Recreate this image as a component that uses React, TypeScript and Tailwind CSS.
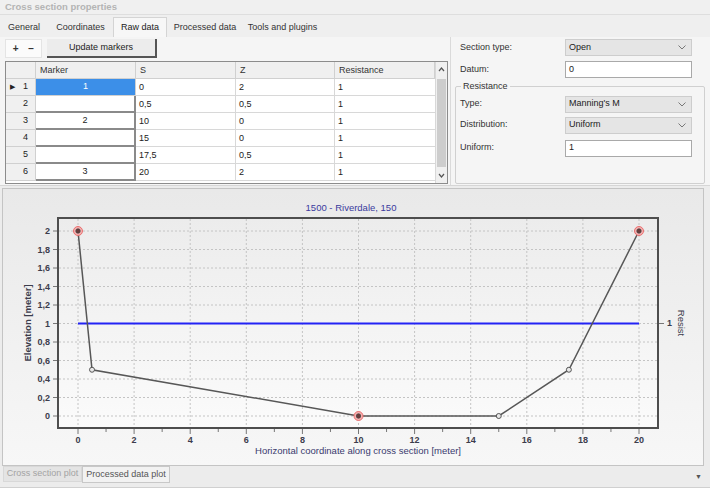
import React from "react";

// chart mapping in page coordinates
const px = (v: number) => 78 + v * 28.05;
const py = (v: number) => 416 - v * 92.5;

const rows = [
  { n: 1, marker: "1", s: "0", z: "2", r: "1" },
  { n: 2, marker: "", s: "0,5", z: "0,5", r: "1" },
  { n: 3, marker: "2", s: "10", z: "0", r: "1" },
  { n: 4, marker: "", s: "15", z: "0", r: "1" },
  { n: 5, marker: "", s: "17,5", z: "0,5", r: "1" },
  { n: 6, marker: "3", s: "20", z: "2", r: "1" },
];

const points: [number, number][] = [
  [0, 2],
  [0.5, 0.5],
  [10, 0],
  [15, 0],
  [17.5, 0.5],
  [20, 2],
];
const markerIdx = [0, 2, 5];

const tabs = [
  { label: "General", w: "w-[48px]" },
  { label: "Coordinates", w: "w-[65px]" },
  { label: "Raw data", w: "w-[54px]", active: true },
  { label: "Processed data", w: "w-[76px]" },
  { label: "Tools and plugins", w: "w-[79px]" },
];

function Chevron() {
  return (
    <svg width="8" height="5" viewBox="0 0 8 5" className="mr-[5px]">
      <path d="M0.5 0.5 L4 4 L7.5 0.5" fill="none" stroke="#777" strokeWidth="1" />
    </svg>
  );
}

function Combo({ value }: { value: string }) {
  return (
    <div className="flex h-[17px] w-[127px] items-center justify-between border border-[#cdcdcd] bg-[#e5e5e5] pl-[3px] text-[#222]">
      <span>{value}</span>
      <Chevron />
    </div>
  );
}

function Input({ value }: { value: string }) {
  return (
    <div className="flex h-[17px] w-[127px] items-center border border-[#a9a9a9] bg-white pl-[3px] text-[#222]">
      {value}
    </div>
  );
}

function FieldRow({ label, children }: { label: string; children: React.ReactNode }) {
  return (
    <div className="flex h-[17px] items-center">
      <div className="w-[110px] pl-[5px] text-[#333]">{label}</div>
      {children}
    </div>
  );
}

function Grid() {
  const cols = "flex h-[17px]";
  return (
    <div className="flex h-[123px] w-[443px] border border-[#8c8c8c] bg-white">
      <div className="flex flex-col">
        <div className={`${cols} bg-[#f0f0f0] text-[#333]`}>
          <div className="w-[30px] border-r border-b border-[#d0d0d0]" />
          <div className="w-[100px] border-r border-b border-[#d0d0d0] pl-[4px] leading-[17px]">Marker</div>
          <div className="w-[100px] border-r border-b border-[#d0d0d0] pl-[4px] leading-[17px]">S</div>
          <div className="w-[99px] border-r border-b border-[#d0d0d0] pl-[4px] leading-[17px]">Z</div>
          <div className="w-[100px] border-r border-b border-[#d0d0d0] pl-[4px] leading-[17px]">Resistance</div>
        </div>
        {rows.map((r) => (
          <div key={r.n} className={`${cols} text-[#222]`}>
            <div className="flex w-[30px] items-center justify-between border-r border-b border-[#d0d0d0] bg-[#f0f0f0] pl-[4px] pr-[7px]">
              <span className="text-[7px] text-[#222]">{r.n === 1 ? "▶" : ""}</span>
              <span>{r.n}</span>
            </div>
            <div
              className={
                r.n === 1
                  ? "flex w-[100px] items-center justify-center border-r border-b border-[#d0d0d0] bg-[#3c8fe8] text-white"
                  : "flex w-[100px] items-center justify-center border-r-2 border-b-2 border-[#8a8a8a] bg-white"
              }
            >
              {r.marker}
            </div>
            <div className="w-[100px] border-r border-b border-[#d8d8d8] pl-[3px] leading-[16px]">{r.s}</div>
            <div className="w-[99px] border-r border-b border-[#d8d8d8] pl-[3px] leading-[16px]">{r.z}</div>
            <div className="w-[100px] border-b border-[#d8d8d8] pl-[3px] leading-[16px]">{r.r}</div>
          </div>
        ))}
      </div>
      <div className="flex w-[12px] flex-col items-center border-l border-[#d8d8d8] bg-[#f0f0f0]">
        <svg width="7" height="14" viewBox="0 0 7 14">
          <path d="M1 9 L3.5 6 L6 9" fill="none" stroke="#555" strokeWidth="1.2" />
        </svg>
        <div className="mt-[3px] h-[88px] w-[9px] bg-[#cdcdcd]" />
        <svg width="7" height="14" viewBox="0 0 7 14" className="mt-auto">
          <path d="M1 5 L3.5 8 L6 5" fill="none" stroke="#555" strokeWidth="1.2" />
        </svg>
      </div>
    </div>
  );
}

function Chart() {
  const xs = Array.from({ length: 11 }, (_, i) => i * 2);
  const ys = Array.from({ length: 11 }, (_, i) => Math.round(i * 2) / 10);
  const line = points.map(([x, y]) => `${px(x)},${py(y)}`).join(" ");
  return (
    <svg width="700" height="276" viewBox="3 189 700 276" className="block">
      <defs>
        <linearGradient id="bgOuter" x1="0" y1="0" x2="0" y2="1">
          <stop offset="0" stopColor="#e9e9e9" />
          <stop offset="1" stopColor="#f7f7f7" />
        </linearGradient>
        <linearGradient id="bgPlot" x1="0" y1="0" x2="0" y2="1">
          <stop offset="0" stopColor="#ececec" />
          <stop offset="1" stopColor="#fbfbfb" />
        </linearGradient>
      </defs>
      <rect x="3" y="189" width="700" height="276" fill="url(#bgOuter)" />
      <text x="351" y="211" textAnchor="middle" fontSize="9.5" fontWeight="500" fill="#3b3b9e">
        1500 - Riverdale, 150
      </text>
      <rect x="58" y="218" width="600" height="210" fill="url(#bgPlot)" />
      {xs.map((v) => (
        <line key={`gx${v}`} x1={px(v)} y1={219} x2={px(v)} y2={427} stroke="#c4c4c4" strokeDasharray="2 2" />
      ))}
      {ys.map((v) => (
        <line key={`gy${v}`} x1={59} y1={py(v)} x2={657} y2={py(v)} stroke="#c4c4c4" strokeDasharray="2 2" />
      ))}
      {/* minor x ticks */}
      {Array.from({ length: 21 }, (_, i) => i).map((v) => (
        <line key={`tx${v}`} x1={px(v)} y1={429} x2={px(v)} y2={v % 2 === 0 ? 434 : 432} stroke="#777" />
      ))}
      {ys.map((v) => (
        <line key={`ty${v}`} x1={53} y1={py(v)} x2={57} y2={py(v)} stroke="#777" />
      ))}
      <line x1={659} y1={323.5} x2={664} y2={323.5} stroke="#777" />
      <line x1={px(0)} y1={py(1)} x2={px(20)} y2={py(1)} stroke="#2323f5" strokeWidth="2" />
      <polyline points={line} fill="none" stroke="#575757" strokeWidth="1.5" />
      {points.map(([x, y], i) =>
        markerIdx.includes(i) ? (
          <g key={`p${i}`}>
            <circle cx={px(x)} cy={py(y)} r="4.5" fill="#f5b0b0" stroke="#e87070" strokeWidth="1" />
            <circle cx={px(x)} cy={py(y)} r="2.2" fill="#6a3a3a" stroke="#444" strokeWidth="0.8" />
          </g>
        ) : (
          <circle key={`p${i}`} cx={px(x)} cy={py(y)} r="2.5" fill="#e8e8e8" stroke="#555" strokeWidth="1" />
        ),
      )}
      <rect x="58" y="218" width="600" height="210" fill="none" stroke="#4e4e4e" strokeWidth="2" />
      {ys.map((v) => (
        <text key={`ly${v}`} x={50} y={py(v) + 3} textAnchor="end" fontSize="9" fontWeight="600" fill="#3c3c4c">
          {v === 0 || v === 1 || v === 2 ? String(v) : v.toFixed(1).replace(".", ",")}
        </text>
      ))}
      {xs.map((v) => (
        <text key={`lx${v}`} x={px(v)} y={443} textAnchor="middle" fontSize="9" fontWeight="600" fill="#3c3c4c">
          {v}
        </text>
      ))}
      <text x={358} y={454} textAnchor="middle" fontSize="9.5" fill="#3a3a6e">
        Horizontal coordinate along cross section [meter]
      </text>
      <text
        x={31}
        y={323}
        textAnchor="middle"
        fontSize="9.5"
        fontWeight="600"
        fill="#3c3c4c"
        transform="rotate(-90 31 323)"
      >
        Elevation [meter]
      </text>
      <text x={667} y={326} fontSize="9" fontWeight="600" fill="#3c3c4c">
        1
      </text>
      <text
        x={678}
        y={323}
        textAnchor="middle"
        fontSize="9.5"
        fontWeight="500"
        fill="#3c3c4c"
        transform="rotate(90 678 323)"
      >
        Resist
      </text>
    </svg>
  );
}

export default function App() {
  return (
    <div className="flex h-[488px] w-[710px] flex-col overflow-hidden bg-[#efefef] font-['Liberation_Sans',Arial,sans-serif] text-[9px] text-[#222]">
      {/* Title */}
      <div className="flex h-[15px] items-center border-b border-[#dedede] bg-[#f0f0f0] pl-[5px] text-[9.5px] font-bold text-[#b4b4b4]">
        Cross section properties
      </div>

      {/* Tabs */}
      <div className="flex h-[22px] items-end bg-[#efefef]">
        {tabs.map((t) => (
          <div
            key={t.label}
            className={
              t.active
                ? `${t.w} flex h-[20px] items-center justify-center border border-b-0 border-[#d4d4d4] bg-[#f7f7f7] text-[#222]`
                : `${t.w} flex h-[19px] items-center justify-center text-[#333]`
            }
          >
            {t.label}
          </div>
        ))}
      </div>

      {/* Top content */}
      <div className="flex h-[149px] border-b border-[#d6d6d6] bg-[#f5f5f5]">
        <div className="flex w-[450px] flex-col gap-[3px] pl-[5px] pt-[2px]">
          <div className="flex h-[19px] items-center">
            <div className="flex h-[19px] w-[37px] items-center justify-around border border-[#e4e4e4] bg-[#fbfbfb] px-[2px] text-[10px] font-bold text-[#333]">
              <span>+</span>
              <span>−</span>
            </div>
            <div className="ml-[5px] flex h-[19px] w-[110px] items-center justify-center border-r-2 border-b-2 border-[#555] bg-[#ececec] text-[#222]">
              Update markers
            </div>
          </div>
          <Grid />
        </div>
        <div className="flex w-[260px] flex-col border-l border-[#dadada] pl-[4px] pt-[2px]">
          <FieldRow label="Section type:">
            <Combo value="Open" />
          </FieldRow>
          <div className="mt-[5px]">
            <FieldRow label="Datum:">
              <Input value="0" />
            </FieldRow>
          </div>
          <fieldset className="mt-[2px] h-[104px] w-[250px] rounded-[2px] border border-[#d0d0d0] pt-[2px]">
            <legend className="ml-[5px] px-[2px] text-[#333]">Resistance</legend>
            <div className="-ml-px flex flex-col">
              <FieldRow label="Type:">
                <Combo value="Manning's M" />
              </FieldRow>
              <div className="mt-[4px]">
                <FieldRow label="Distribution:">
                  <Combo value="Uniform" />
                </FieldRow>
              </div>
              <div className="mt-[6px]">
                <FieldRow label="Uniform:">
                  <Input value="1" />
                </FieldRow>
              </div>
            </div>
          </fieldset>
        </div>
      </div>

      {/* Chart */}
      <div className="h-[280px] bg-[#ececec] px-[2px] pt-[2px]">
        <div className="h-[278px] w-[702px] border border-[#c4c4c4]">
          <Chart />
        </div>
      </div>

      {/* Bottom tabs */}
      <div className="flex h-[22px] items-start justify-between border-b border-[#d0d0d0] bg-[#ececec] pl-[3px] pr-[8px]">
        <div className="flex">
          <div className="flex h-[16px] w-[79px] items-center justify-center border border-[#d8d8d8] bg-[#e4e4e4] text-[#a3a3a3]">
            Cross section plot
          </div>
          <div className="flex h-[17px] w-[88px] items-center justify-center border border-[#c8c8c8] bg-[#f2f2f2] text-[#555]">
            Processed data plot
          </div>
        </div>
        <span className="mt-[6px] text-[7px] text-[#555]">▼</span>
      </div>
    </div>
  );
}
